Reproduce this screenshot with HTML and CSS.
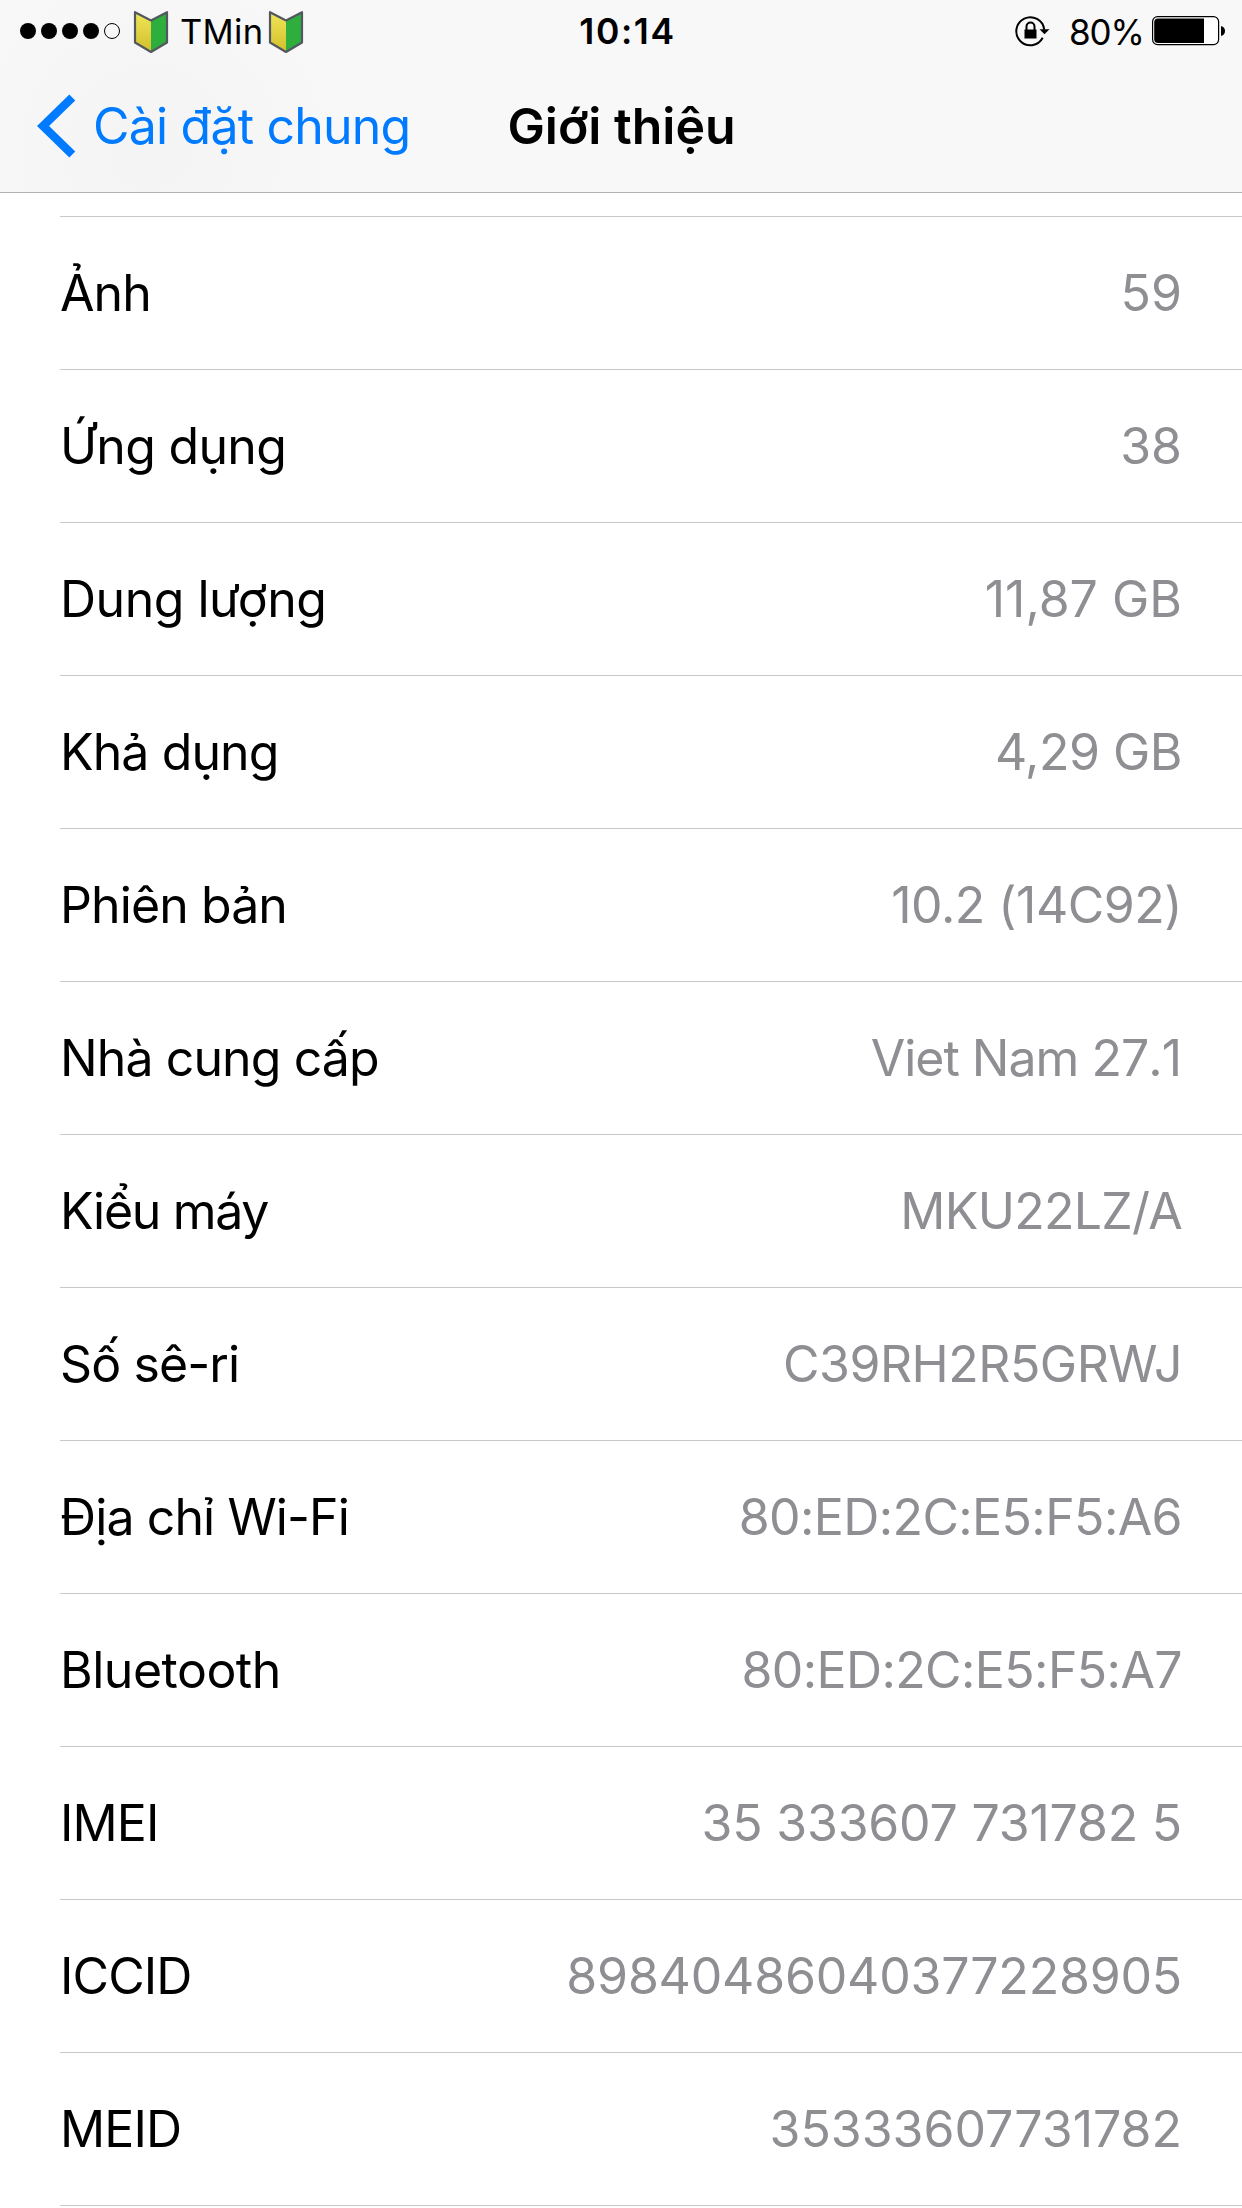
FILE: index.html
```html
<!DOCTYPE html>
<html lang="vi">
<head>
<meta charset="utf-8">
<title>Giới thiệu</title>
<link rel="stylesheet" href="styles.css">
</head>
<body>
<header class="header">
  <div class="status">
    <div class="status-left">
      <div class="signal"><i></i><i></i><i></i><i></i><i class="empty"></i></div>
      <svg class="leaf" width="36" height="46" viewBox="0 0 36 46"><defs><linearGradient id="y" x2="0" y2="1"><stop stop-color="#efe658"/><stop offset="1" stop-color="#d2be2c"/></linearGradient></defs><path d="M2 2.2L18 10.5V42L2.5 33Z" fill="url(#y)"/><path d="M34 2.2L18 10.5V42L33.500 33Z" fill="#2eae3c"/><path d="M2 2.2L18 10.500L34 2.200V32.500L18 42L2 32.500Z" fill="none" stroke="#53575f" stroke-width="2.200" stroke-linejoin="round"/></svg>
      <span class="carrier">TMin</span>
      <svg class="leaf" width="36" height="46" viewBox="0 0 36 46"><path d="M2 2.2L18 10.5V42L2.5 33Z" fill="url(#y)"/><path d="M34 2.2L18 10.5V42L33.500 33Z" fill="#2eae3c"/><path d="M2 2.2L18 10.500L34 2.200V32.500L18 42L2 32.500Z" fill="none" stroke="#53575f" stroke-width="2.200" stroke-linejoin="round"/></svg>
    </div>
    <span class="time">10:14</span>
    <div class="status-right">
      <svg class="lock" width="35" height="32" viewBox="0 0 35 32"><path d="M27.700 22.800A14 14 0 1 1 29.200 14.500" fill="none" stroke="#000" stroke-width="2"/><path d="M24.500 14.200H34.500L29.500 19.200Z"/><path d="M9.500 14.500H21.500V23.500H9.500Z"/><path d="M11.500 15V11.500A4 4 0 0 1 19.500 11.500V15" fill="none" stroke="#000" stroke-width="2"/></svg>
      <span class="percent">80%</span>
      <svg class="battery" width="74" height="30" viewBox="0 0 74 30"><rect x=".6" y=".6" width="66" height="28" rx="5" fill="#fff" stroke="#000" stroke-width="1.200"/><path d="M6 2.500H52V27H6Q2.200 27 2.200 23V6.500Q2.200 2.500 6 2.500Z"/><path d="M69 10Q73 11 73 15T69 20Z"/></svg>
    </div>
  </div>
  <nav class="nav">
    <a class="back"><svg width="39" height="64" viewBox="0 0 39 64"><path d="M35.300 3.500L6 32L35.300 60.500" fill="none" stroke="#007aff" stroke-width="8.500"/></svg><span class="back-label">Cài đặt chung</span></a>
    <h1 class="title">Giới thiệu</h1>
  </nav>
</header>
<main class="list">
  <div class="row"><span class="label">Ảnh</span><span class="value">59</span></div>
  <div class="row"><span class="label snug">Ứng dụng</span><span class="value">38</span></div>
  <div class="row"><span class="label loose">Dung lượng</span><span class="value">11,87 GB</span></div>
  <div class="row"><span class="label">Khả dụng</span><span class="value loose">4,29 GB</span></div>
  <div class="row"><span class="label">Phiên bản</span><span class="value loose">10.2 (14C92)</span></div>
  <div class="row"><span class="label">Nhà cung cấp</span><span class="value unkerned">Viet Nam 27.1</span></div>
  <div class="row"><span class="label tight">Kiểu máy</span><span class="value snug">MKU22LZ/A</span></div>
  <div class="row"><span class="label">Số sê-ri</span><span class="value loose">C39RH2R5GRWJ</span></div>
  <div class="row"><span class="label">Địa chỉ Wi-Fi</span><span class="value colons">80:ED:2C:E5:F5:A6</span></div>
  <div class="row"><span class="label loose">Bluetooth</span><span class="value colons">80:ED:2C:E5:F5:A7</span></div>
  <div class="row"><span class="label">IMEI</span><span class="value wide">35 333607 731782 5</span></div>
  <div class="row"><span class="label">ICCID</span><span class="value wide">89840486040377228905</span></div>
  <div class="row"><span class="label">MEID</span><span class="value">35333607731782</span></div>
</main>
</body>
</html>
```

FILE: styles.css
```css
* { box-sizing: border-box; }
body {
  margin: 0;
  background: #fff;
  color: #000;
  font-family: Inter, "Liberation Sans", sans-serif;
  height: 2208px;
  overflow: hidden;
}
.header {
  height: 193px;
  background: radial-gradient(circle at 150px 150px, #f4f4f4, #f8f8f8 200px);
  border-bottom: 1px solid #b2b2b2;
}
.status {
  height: 60px;
  display: grid;
  grid-template-columns: 1fr auto 1fr;
  align-items: center;
  padding: 0 16px 0 20px;
  line-height: 60px;
}
.status-left, .status-right { display: flex; align-items: center; }
.status-right { justify-content: flex-end; }
.signal { display: flex; gap: 5px; }
.signal i { width: 16px; height: 16px; border-radius: 50%; background: #000; }
.signal .empty { background: none; border: 1px solid #000; }
.leaf { margin-left: 13px; margin-top: 3px; }
.carrier { font-size: 34.5px; letter-spacing: .3px; margin-left: 11px; padding-top: 2px; }
.carrier + .leaf { margin-left: 5px; }
.time { font-size: 35.5px; font-weight: 580; letter-spacing: 1.6px; padding: 2px 0 0 9px; }
.percent { font-size: 35px; letter-spacing: -1px; margin: 1px 8px 0 19px; }
.nav {
  height: 132px;
  display: grid;
  grid-template-columns: 1fr auto 1fr;
  align-items: center;
  line-height: 132px;
}
.back { display: flex; align-items: center; color: #007aff; padding-left: 37px; }
.back-label { font-size: 50px; letter-spacing: -.8px; margin-left: 17px; white-space: nowrap; }
.title { margin: 0; padding-left: 1px; font-size: 50px; font-weight: 600; }
.list { margin-left: 60px; padding-top: 23px; }
.row {
  height: 153px;
  display: flex;
  justify-content: space-between;
  border-top: 1px solid #c8c7cc;
  padding: 0 60px 0 0;
  font-size: 50px;
  line-height: 152px;
  white-space: nowrap;
}
.row:last-child { height: 154px; border-bottom: 1px solid #c8c7cc; }
.label { letter-spacing: -.9px; }
.value { color: #8e8e93; }

/* Optical tracking adjustments */
.tight { letter-spacing: -1.3px; }
.snug { letter-spacing: -.7px; }
.colons { letter-spacing: -.6px; }
.loose { letter-spacing: -.5px; }
.wide { letter-spacing: -.2px; }
.unkerned { font-kerning: none; letter-spacing: -1px; padding-right: 1px; }
```
